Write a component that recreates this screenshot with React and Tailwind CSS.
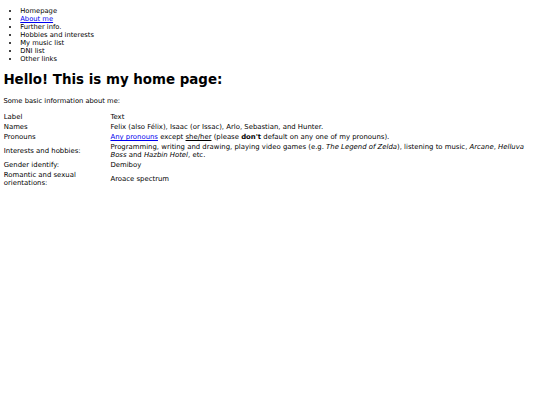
export default function App() {
  const items = ["Homepage", "About me", "Further info.", "Hobbies and interests", "My music list", "DNI list", "Other links"];
  const td = "px-[0.42px] py-[1px] align-middle";
  return (
    <div className="min-h-[405px] bg-white px-[3.375px] pt-[6.75px] text-black font-['DejaVu_Sans',sans-serif] text-[6.75px] leading-[normal]">
      <ul className="list-disc pl-[16.875px] m-0">
        {items.map((t) =>
          t === "About me" ? (
            <li key={t}>
              <a href="#" className="text-[#0000ee] underline">{t}</a>
            </li>
          ) : (
            <li key={t}>{t}</li>
          )
        )}
      </ul>
      <h1 className="text-[13.4px] font-bold mt-[9.5px] mb-[9.5px]">Hello! This is my home page:</h1>
      <p className="mt-[6.75px] mb-[7.5px]">Some basic information about me:</p>
      <table className="w-full border-separate border-spacing-x-[0.84px] border-spacing-y-0 text-[6.9px]">
        <tbody>
          <tr>
            <td className={td + " w-[20%]"}>Label</td>
            <td className={td}>Text</td>
          </tr>
          <tr>
            <td className={td}>Names</td>
            <td className={td}>Felix (also Félix), Isaac (or Issac), Arlo, Sebastian, and Hunter.</td>
          </tr>
          <tr>
            <td className={td}>Pronouns</td>
            <td className={td}>
              <a href="#" className="text-[#0000ee] underline">Any pronouns</a> except <u>she/her</u> (please <b>don't</b> default on any one of my pronouns).
            </td>
          </tr>
          <tr>
            <td className={td}>Interests and hobbies:</td>
            <td className={td}>
              Programming, writing and drawing, playing video games (e.g. <i>The Legend of Zelda</i>), listening to music, <i>Arcane</i>, <i>Helluva Boss</i> and <i>Hazbin Hotel</i>, etc.
            </td>
          </tr>
          <tr>
            <td className={td}>Gender identify:</td>
            <td className={td}>Demiboy</td>
          </tr>
          <tr>
            <td className={td}>Romantic and sexual orientations:</td>
            <td className={td}>Aroace spectrum</td>
          </tr>
        </tbody>
      </table>
    </div>
  );
}
